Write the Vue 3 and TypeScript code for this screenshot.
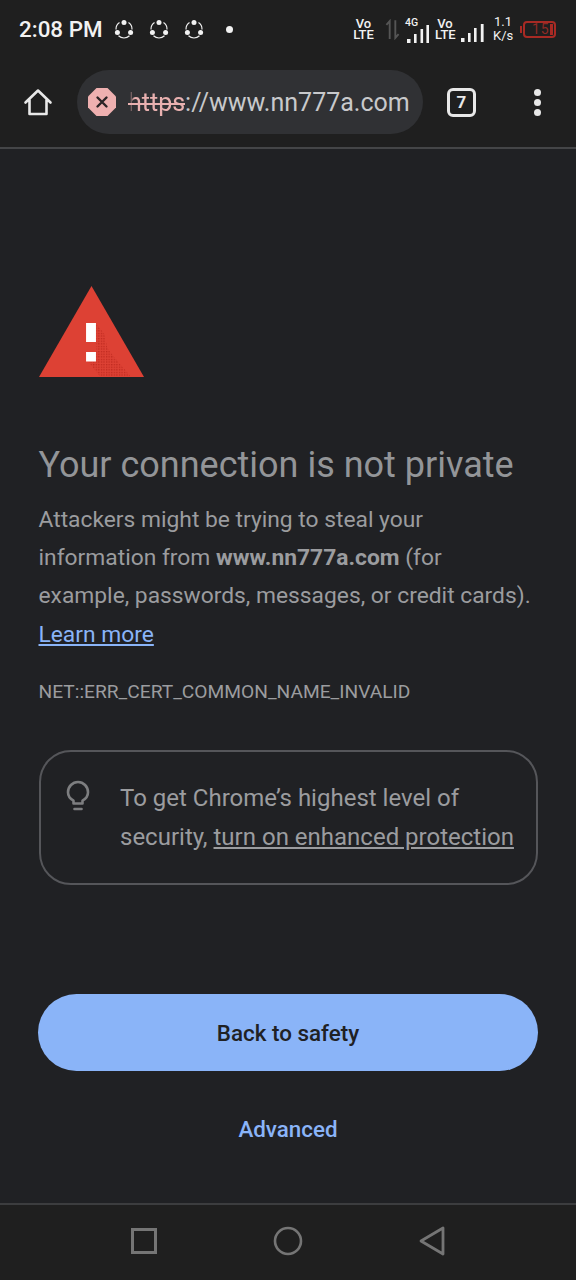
<script setup lang="ts">
const shares = [0, 1, 2];
</script>

<template>
  <div class="page">
    <header class="top">
      <div class="status">
        <div class="status-left">
          <span class="time">2:08 PM</span>
          <svg v-for="s in shares" :key="s" class="share" viewBox="0 0 20 20" fill="none">
            <path d="M2 10.500A8 8 0 0 1 5.500 3.400M14.500 3.400A8 8 0 0 1 18 10.500M15.500 16.800A8 8 0 0 1 4.500 16.800" stroke="#eee" stroke-width="1.200" />
            <circle cx="10" cy="3.400" r="2.500" fill="#f2f2f2" />
            <circle cx="3.400" cy="13.400" r="2.500" fill="#f2f2f2" />
            <circle cx="16.600" cy="13.400" r="2.500" fill="#f2f2f2" />
          </svg>
          <span class="dot"></span>
        </div>
        <div class="status-right">
          <span class="volte">Vo<br />LTE</span>
          <svg class="arrows" viewBox="0 0 16 22" fill="none">
            <path d="M5 21V2L1.500 6M11 1v19l3.500-4" stroke="#555" stroke-width="2" />
          </svg>
          <div class="signal-wrap">
            <span class="g4">4G</span>
            <svg class="signal" viewBox="0 0 23 18">
              <rect x="1" y="14" width="3.500" height="4" fill="#f2f2f2" />
              <rect x="8" y="9" width="2.600" height="9" fill="#f2f2f2" />
              <rect x="14.500" y="4" width="2.600" height="14" fill="#f2f2f2" />
              <rect x="20.400" y="0" width="2.600" height="18" fill="#f2f2f2" />
            </svg>
          </div>
          <span class="volte second">Vo<br />LTE</span>
          <svg class="signal plain" viewBox="0 0 23 18">
            <rect x="0" y="14" width="3.500" height="4" fill="#f2f2f2" />
            <rect x="7" y="9" width="2.600" height="9" fill="#f2f2f2" />
            <rect x="13" y="4" width="2.600" height="14" fill="#f2f2f2" />
            <rect x="19.800" y="0" width="2.800" height="18" fill="#f2f2f2" />
          </svg>
          <span class="speed">1.1<br />K/s</span>
          <div class="battery">
            <span class="battery-num">15</span>
            <span class="battery-fill"></span>
          </div>
        </div>
      </div>
      <div class="toolbar">
        <svg class="home" viewBox="0 0 30 30" fill="none">
          <path d="M2.500 15.500 15 3.500l12.500 12M6.500 13v14h17V13" stroke="#e8e8e8" stroke-width="2.600" stroke-linejoin="round" stroke-linecap="round" />
        </svg>
        <div class="omnibox">
          <svg class="sec" viewBox="0 0 28 28">
            <path d="M8.500 0h11L28 8.500v11L19.500 28h-11L0 19.500v-11z" fill="#eeb0b0" />
            <path d="M9.500 9.500l9 9M18.500 9.500l-9 9" stroke="#2b2426" stroke-width="2.400" stroke-linecap="round" />
          </svg>
          <span class="url"><span class="scheme"><span class="scheme-text">https</span></span>://www.nn777a.com</span>
        </div>
        <div class="tabs">7</div>
        <div class="menu"><i></i><i></i><i></i></div>
      </div>
    </header>

    <main class="content">
      <svg class="warn" viewBox="0 0 106 92" preserveAspectRatio="none">
        <defs>
          <pattern id="dither" width="2.600" height="2.600" patternUnits="userSpaceOnUse">
            <rect width="1.300" height="1.300" fill="#bf2a20" />
          </pattern>
        </defs>
        <path d="M53 0 106 91H0z" fill="#dd4134" />
        <path d="M58 38l8 10 3 14 6 8 18 21H62L50 76h8z" fill="url(#dither)" />
        <rect x="47.500" y="37" width="10" height="19" fill="#fff" />
        <rect x="47.500" y="66" width="10" height="9.500" fill="#fff" />
      </svg>
      <h1>Your connection is not private</h1>
      <p class="body">
        Attackers might be trying to steal your information from <b>www.nn777a.com</b> (for example, passwords, messages, or credit cards).
        <a class="learn">Learn more</a>
      </p>
      <p class="code">NET::ERR_CERT_COMMON_NAME_INVALID</p>
      <div class="promo">
        <svg class="bulb" viewBox="0 0 24 32" fill="none">
          <path d="M7.500 23.500v-2.800C4 18.800 2 15.700 2 12.300 2 6.600 6.500 2 12 2s10 4.600 10 10.300c0 3.400-2 6.500-5.500 8.400v2.800z" stroke="#7d7e80" stroke-width="2.600" stroke-linejoin="round" />
          <path d="M8.500 29h7" stroke="#7d7e80" stroke-width="2.600" stroke-linecap="round" />
        </svg>
        <p>To get Chrome’s highest level of security, <u>turn on enhanced protection</u></p>
      </div>
      <button class="safety" type="button">Back to safety</button>
      <button class="advanced" type="button">Advanced</button>
    </main>

    <footer class="nav">
      <svg viewBox="0 0 26 26" class="nav-i"><rect x="1.500" y="1.500" width="23" height="23" fill="none" stroke="#757575" stroke-width="3" /></svg>
      <svg viewBox="0 0 30 30" class="nav-i circle"><circle cx="15" cy="15" r="13" fill="none" stroke="#757575" stroke-width="2.600" /></svg>
      <svg viewBox="0 0 26 30" class="nav-i tri"><path d="M24 2v26L2 15z" fill="none" stroke="#757575" stroke-width="2.800" stroke-linejoin="round" /></svg>
    </footer>
  </div>
</template>

<style>
html, body { margin: 0; background: #202124; }
</style>

<style scoped>
.page {
  width: 576px;
  height: 1280px;
  display: flex;
  flex-direction: column;
  background: #202124;
  font-family: Roboto, "Liberation Sans", sans-serif;
  overflow: hidden;
}
.top {
  height: 149px;
  flex: none;
  background: #1f1f1f;
  border-bottom: 2px solid #444547;
  box-sizing: border-box;
}
.status {
  height: 60px;
  display: flex;
  justify-content: space-between;
  align-items: center;
  padding: 0 20px 2px 19px;
  box-sizing: border-box;
}
.status-left { display: flex; align-items: center; }
.time { color: #f2f2f2; font-size: 22.400px; font-weight: 500; margin-right: 11px; }
.share { width: 20px; height: 20px; margin-right: 15px; }
.dot { width: 7px; height: 7px; border-radius: 50%; background: #f2f2f2; margin-left: 7px; }
.status-right { display: flex; align-items: center; color: #f2f2f2; }
.volte { font-size: 13px; line-height: 11.500px; font-weight: 500; text-align: center; width: 21px; }
.volte.second { margin-left: 1px; width: 20px; }
.arrows { width: 15px; height: 21px; margin-left: 10.500px; }
.signal-wrap { position: relative; width: 26px; height: 28px; margin: 0 6px 0 2.500px; }
.g4 { position: absolute; left: 3px; top: 1px; font-size: 10.500px; font-weight: 500; }
.signal { position: absolute; left: 4px; bottom: 0; width: 23px; height: 18px; }
.signal.plain { position: static; margin: 8px 0 0 6px; }
.speed { font-size: 13px; line-height: 14.500px; text-align: center; width: 20px; margin: 0 10px 0 9px; }
.battery {
  position: relative;
  width: 33px;
  height: 17px;
  border: 2px solid #a82a24;
  border-radius: 4px;
  color: #8e2a25;
  font-size: 14px;
  line-height: 13px;
  padding-left: 7px;
  box-sizing: border-box;
}
.battery-num { letter-spacing: 1px; }
.battery-fill { position: absolute; right: 1px; top: 1px; bottom: 1px; width: 3px; background: #a82a24; }
.battery::before { content: ""; position: absolute; left: -5px; top: 3px; width: 2px; height: 7px; background: #a82a24; }

.toolbar {
  height: 64px;
  margin-top: 10px;
  display: flex;
  align-items: center;
  padding-left: 23px;
}
.home { width: 30px; height: 30px; margin-right: 24px; flex: none; }
.omnibox {
  width: 346px;
  height: 64px;
  flex: none;
  border-radius: 32px;
  background: #303134;
  display: flex;
  align-items: center;
  padding-left: 11px;
  box-sizing: border-box;
}
.sec { width: 28px; height: 28px; flex: none; margin-right: 12px; }
.url { color: #c8c9cb; font-size: 25px; white-space: nowrap; }
.scheme { color: #e9b1b0; position: relative; display: inline-block; }
.scheme-text {
  -webkit-mask-image: linear-gradient(to right, transparent 2px, #000 6px);
  mask-image: linear-gradient(to right, transparent 2px, #000 6px);
}
.scheme::after {
  content: "";
  position: absolute;
  left: 0;
  right: 0;
  top: 15px;
  height: 2px;
  background: #e9b1b0;
}
.tabs {
  width: 29px;
  height: 29px;
  margin-left: 24px;
  flex: none;
  border: 3px solid #e8e8e8;
  border-radius: 6px;
  box-sizing: border-box;
  color: #e8e8e8;
  font-size: 17px;
  font-weight: 700;
  display: flex;
  align-items: center;
  justify-content: center;
}
.menu { display: flex; flex-direction: column; gap: 3px; margin-left: 58px; }
.menu i { width: 7px; height: 7px; border-radius: 50%; background: #e8e8e8; display: block; }

.content {
  flex: 1;
  padding: 137px 38px 0;
  display: flex;
  flex-direction: column;
  min-height: 0;
}
.warn { width: 105px; height: 92px; flex: none; margin-left: 0.500px; }
h1 {
  margin: 64px 0 0 0.500px;
  color: #939598;
  font-size: 36px;
  font-weight: 400;
  line-height: 46px;
  white-space: nowrap;
}
.body {
  margin: 13px 0 0 0.500px;
  color: #9b9c9f;
  font-size: 22.800px;
  line-height: 38.200px;
  width: 495px;
}
.body b { font-weight: 700; }
.learn { color: #8ab4f8; text-decoration: underline; display: block; }
.code { margin: 25.400px 0 0 0.500px; color: #9b9c9f; font-size: 19.200px; line-height: 26px; }
.promo {
  margin-top: 45px;
  width: 499px;
  height: 135px;
  box-sizing: border-box;
  border: 2px solid #55565a;
  border-radius: 32px;
  display: flex;
  margin-left: 0.500px;
  padding: 26px 0 0 25px;
}
.bulb { width: 24px; height: 32px; flex: none; margin-top: 2px; }
.promo p {
  margin: 1px 0 0 30.500px;
  color: #9b9c9f;
  font-size: 24px;
  line-height: 38.300px;
  width: 412px;
}
.safety {
  margin-top: 109px;
  width: 500px;
  height: 77px;
  flex: none;
  border: 0;
  border-radius: 39px;
  background: #8ab4f8;
  color: #202124;
  font: 500 22.400px Roboto, "Liberation Sans", sans-serif;
}
.advanced {
  margin-top: 39px;
  width: 500px;
  padding: 0;
  border: 0;
  background: none;
  color: #8ab4f8;
  font: 500 22.400px Roboto, "Liberation Sans", sans-serif;
  line-height: 38px;
  text-align: center;
}
.nav {
  height: 77px;
  flex: none;
  box-sizing: border-box;
  border-top: 2px solid #3c3d3f;
  background: #1f1f1f;
  position: relative;
}
.nav-i { position: absolute; }
.nav-i:nth-child(1) { left: 131px; top: 23px; width: 26px; height: 26px; }
.nav-i.circle { left: 273px; top: 21px; width: 30px; height: 30px; }
.nav-i.tri { left: 419px; top: 21px; width: 26px; height: 30px; }
</style>
